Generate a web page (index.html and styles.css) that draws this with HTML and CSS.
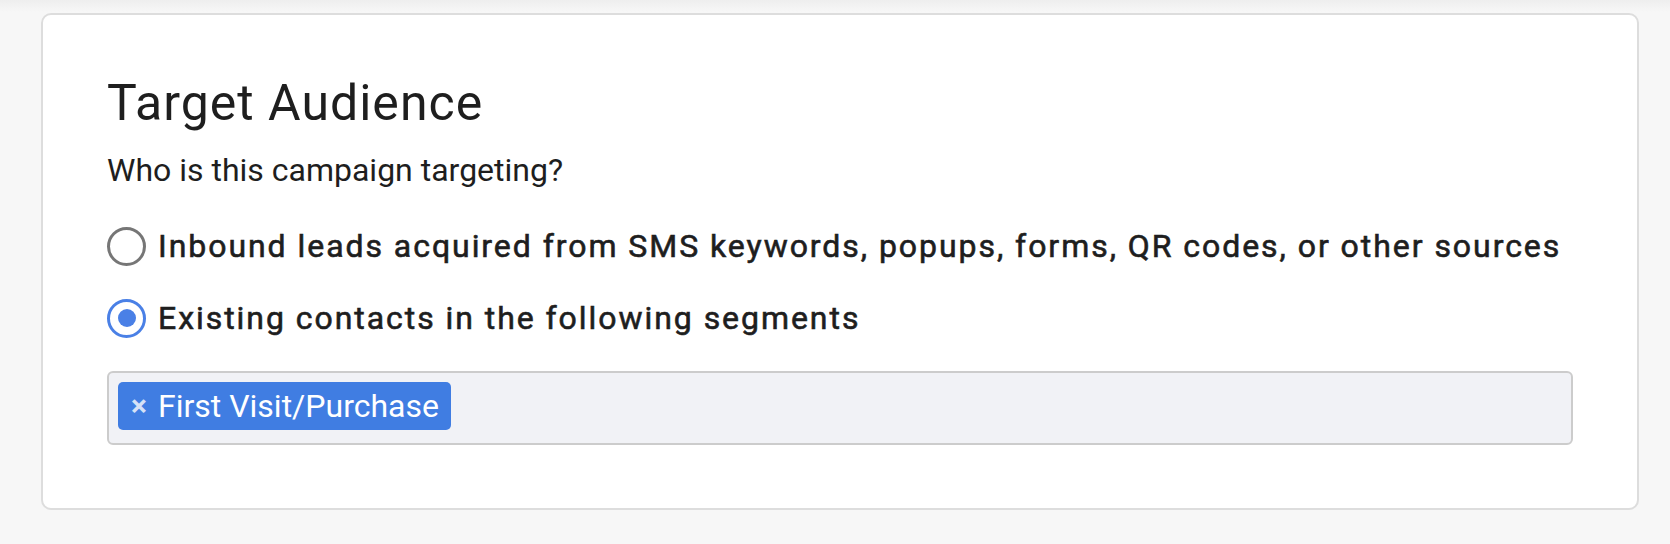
FILE: index.html
```html
<!DOCTYPE html>
<html lang="en">
<head>
<meta charset="utf-8">
<title>Target Audience</title>
<link rel="stylesheet" href="styles.css">
</head>
<body>
<main class="page">
  <section class="card">
    <h2 class="title">Target Audience</h2>
    <p class="subtitle">Who is this campaign targeting?</p>
    <div class="options">
      <label class="option">
        <span class="radio"></span>
        <span class="option-text">Inbound leads acquired from SMS keywords, popups, forms, QR codes, or other sources</span>
      </label>
      <label class="option">
        <span class="radio radio-checked"></span>
        <span class="option-text">Existing contacts in the following segments</span>
      </label>
    </div>
    <div class="select">
      <span class="tag"><span class="tag-x">×</span>First Visit/Purchase</span>
    </div>
  </section>
</main>
</body>
</html>
```
FILE: styles.css
```css
html, body {
  margin: 0;
  padding: 0;
}
body {
  background: linear-gradient(#eeeeee 0px, #f7f7f7 12px) #f7f7f7;
  font-family: Roboto, "Liberation Sans", Arial, sans-serif;
  color: #1f1f1f;
  width: 1670px;
  height: 544px;
  overflow: hidden;
}
.page {
  padding: 13px 0 0 41px;
}
.card {
  box-sizing: border-box;
  width: 1598px;
  height: 497px;
  background: #ffffff;
  border: 2px solid #dddddd;
  border-radius: 10px;
  padding: 58px 64px 0 64px;
}
.title {
  margin: 0;
  font-size: 50px;
  line-height: 60px;
  font-weight: 400;
  letter-spacing: 1px;
  color: #1e1e1e;
}
.subtitle {
  margin: 17px 0 0 0;
  font-size: 32px;
  line-height: 40px;
  font-weight: 400;
  color: #1e1e1e;
}
.options {
  margin-top: 36px;
  display: flex;
  flex-direction: column;
  gap: 32px;
}
.option {
  display: flex;
  align-items: center;
  gap: 12px;
  height: 40px;
}
.radio {
  box-sizing: border-box;
  width: 39px;
  height: 39px;
  border-radius: 50%;
  border: 3.5px solid #767676;
  background: #ffffff;
  flex: none;
  display: flex;
  align-items: center;
  justify-content: center;
}
.radio-checked {
  border-color: #4a80e6;
}
.radio-checked::after {
  content: "";
  width: 18px;
  height: 18px;
  border-radius: 50%;
  background: #4a80e6;
}
.option-text {
  font-size: 32px;
  line-height: 40px;
  font-weight: 400;
  -webkit-text-stroke: 0.6px #1e1e1e;
  letter-spacing: 1.95px;
  color: #1e1e1e;
}
.select {
  box-sizing: border-box;
  margin-top: 33px;
  height: 74px;
  background: #f1f2f6;
  border: 2px solid #cccccc;
  border-radius: 6px;
  padding: 9px 9px 0 9px;
  display: flex;
  align-items: flex-start;
}
.tag {
  display: inline-flex;
  align-items: center;
  height: 48px;
  padding: 0 12px 0 13px;
  background: #407de2;
  border-radius: 5px;
  color: #ffffff;
  font-size: 32px;
  line-height: 48px;
  font-weight: 400;
}
.tag-x {
  color: #d6e2f7;
  font-weight: 700;
  font-size: 30px;
  margin-right: 11px;
}
```
